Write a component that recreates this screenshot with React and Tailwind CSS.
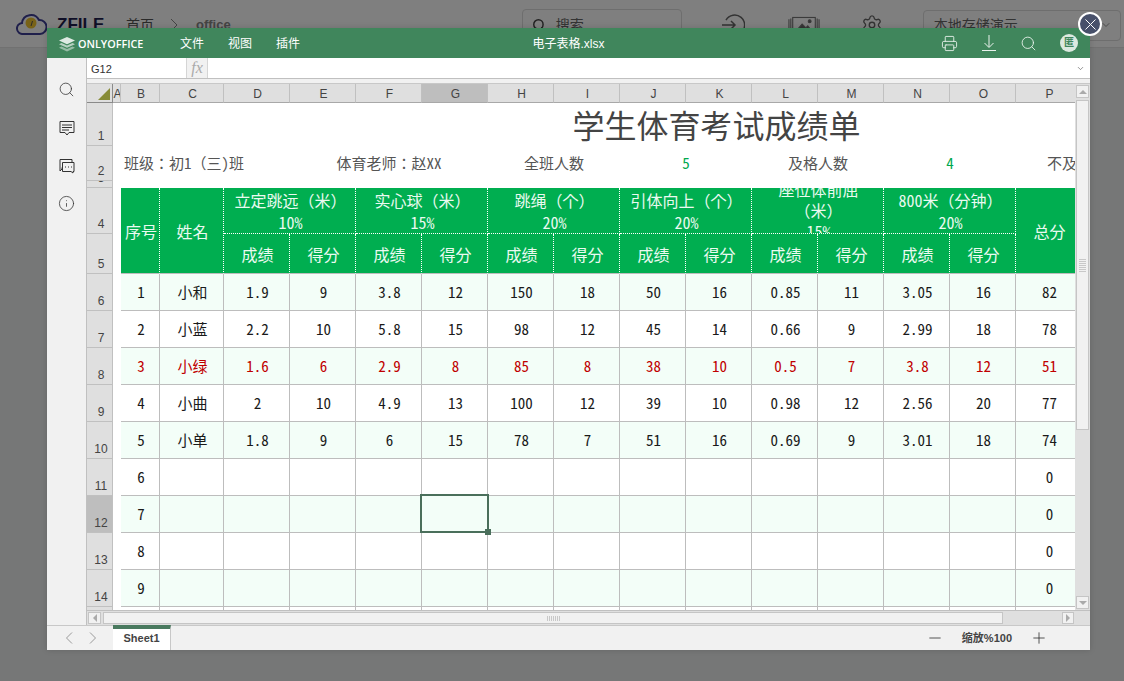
import React from 'react';
import { Printer, Search, Info, Settings, ChevronDown, Plus, Minus, X } from 'lucide-react';

const columns = ['A', 'B', 'C', 'D', 'E', 'F', 'G', 'H', 'I', 'J', 'K', 'L', 'M', 'N', 'O', 'P'];

const students = [
  ['1', '小和', '1.9', '9', '3.8', '12', '150', '18', '50', '16', '0.85', '11', '3.05', '16', '82'],
  ['2', '小蓝', '2.2', '10', '5.8', '15', '98', '12', '45', '14', '0.66', '9', '2.99', '18', '78'],
  ['3', '小绿', '1.6', '6', '2.9', '8', '85', '8', '38', '10', '0.5', '7', '3.8', '12', '51'],
  ['4', '小曲', '2', '10', '4.9', '13', '100', '12', '39', '10', '0.98', '12', '2.56', '20', '77'],
  ['5', '小单', '1.8', '9', '6', '15', '78', '7', '51', '16', '0.69', '9', '3.01', '18', '74'],
  ['6', '', '', '', '', '', '', '', '', '', '', '', '', '', '0'],
  ['7', '', '', '', '', '', '', '', '', '', '', '', '', '', '0'],
  ['8', '', '', '', '', '', '', '', '', '', '', '', '', '', '0'],
  ['9', '', '', '', '', '', '', '', '', '', '', '', '', '', '0'],
  ['', '', '', '', '', '', '', '', '', '', '', '', '', '', ''],
];

const groups = [
  { title: '立定跳远（米）', weight: '10%' },
  { title: '实心球（米）', weight: '15%' },
  { title: '跳绳（个）', weight: '20%' },
  { title: '引体向上（个）', weight: '20%' },
  { title: '座位体前屈（米）', weight: '15%', narrow: true },
  { title: '800米（分钟）', weight: '20%' },
];

const sheetFont = "font-['Noto_Sans_Mono_CJK_JP','Noto_Sans_CJK_JP',monospace]";
const uiFont = "font-['Liberation_Sans','Noto_Sans_CJK_SC',sans-serif]";

const RowLabel = ({ n, active }) => (
  <div className={`flex items-end justify-center overflow-hidden border-r border-b border-[#c0c0c0] pl-[3px] text-xs leading-[18px] text-[#444] ${uiFont} ${active ? 'bg-[#bebebe]' : 'bg-[#dfdfdf]'}`}>
    {n}
  </div>
);

const HeadCell = ({ className = '', children }) => (
  <div className={`flex items-center justify-center overflow-hidden border-r border-b border-dotted border-white bg-[#00ae50] pl-[2px] text-center text-base text-[#eafaf0] ${className}`}>
    {children}
  </div>
);

// bottom edge of the green head sits on a solid grey line
const headBottom = '[border-bottom-style:solid] border-b-[#bdbdbd]';

const Sheet = () => (
  <div className={`grid h-[526px] w-[988px] flex-none grid-cols-[26px_8px_39px_64px_repeat(12,66px)_66px] grid-rows-[19px_43px_35px_7px_46px_40px_repeat(10,37px)] overflow-hidden bg-white ${sheetFont}`}>
    {/* column headers */}
    <div className="relative border-r border-b border-[#8a8a8a] bg-[#dfdfdf]">
      <svg className="absolute left-[11px] top-[4px]" width="12" height="12" viewBox="0 0 12 12">
        <polygon points="12,0 12,12 0,12" fill="#878c38" />
      </svg>
    </div>
    {columns.map((c) => (
      <div
        key={c}
        className={`flex items-center justify-center overflow-hidden border-r border-b border-r-[#c0c0c0] border-b-[#a8a8a8] pl-[2px] pt-[2px] text-xs text-[#444] ${uiFont} ${c === 'G' ? 'bg-[#bebebe]' : 'bg-[#dfdfdf]'}`}
      >
        {c}
      </div>
    ))}

    {/* title */}
    <RowLabel n="1" />
    <div className="col-span-5" />
    <div className="col-span-11 flex items-center justify-center overflow-hidden whitespace-nowrap pr-[5px] pb-px text-[32px] text-[#444]">学生体育考试成绩单</div>

    {/* summary */}
    <RowLabel n="2" />
    <div />
    <div className="col-span-3 flex items-center pl-[3px] text-[15px] whitespace-nowrap text-[#555]">班级：初1（三)班</div>
    <div className="col-span-3 flex items-center justify-center text-[15px] whitespace-nowrap text-[#555]">体育老师：赵XX</div>
    <div className="col-span-2 flex items-center justify-center text-[15px] text-[#555]">全班人数</div>
    <div className="col-span-2 flex items-center justify-center text-[15px] text-[#00a84e]">5</div>
    <div className="col-span-2 flex items-center justify-center text-[15px] text-[#555]">及格人数</div>
    <div className="col-span-2 flex items-center justify-center text-[15px] text-[#00a84e]">4</div>
    <div className="flex items-center overflow-hidden whitespace-nowrap pl-[31px] text-[15px] text-[#555]">不及格人数</div>

    <RowLabel n="3" />
    <div className="col-span-16" />

    {/* table head */}
    <RowLabel n="4" />
    <div />
    <HeadCell className={`row-span-2 ${headBottom}`}>序号</HeadCell>
    <HeadCell className={`row-span-2 ${headBottom}`}>姓名</HeadCell>
    {groups.map((g) => (
      <HeadCell key={g.title} className={`col-span-2 ${g.narrow ? 'leading-[21px]' : 'leading-[22px]'}`}>
        <div className={g.narrow ? 'w-[100px]' : 'whitespace-nowrap'}>
          {g.title}
          <br />
          {g.weight}
        </div>
      </HeadCell>
    ))}
    <HeadCell className={`row-span-2 ${headBottom}`}>总分</HeadCell>
    <RowLabel n="5" />
    <div />
    {groups.flatMap((g) => [
      <HeadCell key={g.title + '成绩'} className={headBottom}>成绩</HeadCell>,
      <HeadCell key={g.title + '得分'} className={headBottom}>得分</HeadCell>,
    ])}

    {/* data */}
    {students.map((row, r) => (
      <React.Fragment key={r}>
        <RowLabel n={r < 9 ? r + 6 : ''} active={r === 6} />
        <div />
        {row.map((v, c) => (
          <div
            key={c}
            className={`relative flex items-center justify-center border-r border-b border-[#bdbdbd] pl-[2px] text-[15px] ${r % 2 === 0 ? 'bg-[#f3fef8]' : 'bg-white'} ${r === 2 ? 'text-[#c00000]' : 'text-[#1a1a1a]'}`}
          >
            {v}
            {r === 6 && c === 5 && (
              <div className="absolute -left-[2px] -top-[2px] z-10 h-[39px] w-[69px] border-2 border-[#4a6f5b]">
                <div className="absolute -bottom-[4px] -right-[4px] size-[6px] bg-[#4a6f5b]" />
              </div>
            )}
          </div>
        ))}
      </React.Fragment>
    ))}
  </div>
);

const VScroll = () => (
  <div className="flex h-[526px] w-[15px] flex-col items-center gap-[2px] bg-[#dfdfdf] pt-px">
    <div className="flex h-[13px] w-[13px] items-center justify-center border border-[#c5c5c5] bg-[#f1f1f1]">
      <div className="border-x-[4px] border-b-[4px] border-x-transparent border-b-[#aaa]" />
    </div>
    <div className="flex h-[330px] w-[13px] flex-col items-center justify-end gap-px border border-[#c5c5c5] bg-[#f1f1f1] pb-[157px]">
      {[0, 1, 2, 3, 4, 5, 6].map((i) => (
        <div key={i} className="h-px w-[7px] bg-[#c8c8c8]" />
      ))}
    </div>
    <div className="mt-auto mb-px flex h-[13px] w-[13px] items-center justify-center border border-[#c5c5c5] bg-[#f1f1f1]">
      <div className="border-x-[4px] border-t-[4px] border-x-transparent border-t-[#aaa]" />
    </div>
  </div>
);

const HScroll = () => (
  <div className="flex h-[15px] items-center gap-[2px] border-t border-[#c0c0c0] bg-[#dfdfdf] pl-px">
    <div className="flex h-[12px] w-[13px] items-center justify-center border border-[#c5c5c5] bg-[#f1f1f1]">
      <div className="border-y-[4px] border-r-[4px] border-y-transparent border-r-[#aaa]" />
    </div>
    <div className="flex h-[12px] w-[900px] items-center justify-center gap-px border border-[#c5c5c5] bg-[#f1f1f1]">
      {[0, 1, 2, 3, 4, 5, 6].map((i) => (
        <div key={i} className="h-[5px] w-px bg-[#c8c8c8]" />
      ))}
    </div>
    <div className="ml-[57px] flex h-[12px] w-[12px] items-center justify-center border border-[#c5c5c5] bg-[#f1f1f1]">
      <div className="border-y-[4px] border-l-[4px] border-y-transparent border-l-[#aaa]" />
    </div>
  </div>
);

const Rail = () => (
  <div className="flex w-[40px] flex-col items-center gap-[22px] border-r border-[#c0c0c0] bg-[#f1f1f1] pt-[23px] text-[#333]">
    <Search size={17} strokeWidth={1.1} />
    <svg width="16" height="16" viewBox="0 0 16 16" fill="none" stroke="currentColor">
      <path d="M1 1.5h14v11h-5L8 15l-2-2.500H1z" />
      <path d="M3 5h10M3 7.500h10M3 10h7" />
    </svg>
    <svg width="16" height="16" viewBox="0 0 16 16" fill="none" stroke="currentColor">
      <path d="M3 9.500V11L1 13V1.500h12V4" />
      <path d="M3.500 4.500h11.500v9h-1v1.500l-2-1.500h-8.500z" />
      <path d="M6 9h1M9 9h1M12 9h1" />
    </svg>
    <Info size={17} strokeWidth={1.1} className="-mt-px" />
  </div>
);

const Editor = () => (
  <div className={`absolute left-[47px] top-[28px] flex h-[622px] w-[1043px] flex-col bg-[#f1f1f1] shadow-[0_0_6px_rgba(0,0,0,0.15)] ${uiFont}`}>
    {/* top bar */}
    <div className="grid h-[31px] grid-cols-[1fr_auto_1fr] items-center bg-[#40865c] pl-3 pr-[12px] text-xs text-white">
      <div className="flex items-center pt-[2px]">
        <svg width="16" height="15" viewBox="0 0 16 15" fill="#dfeae3">
          <path d="M8 0l8 3.600-8 3.600-8-3.600z" />
          <path opacity=".75" d="M2.500 6L8 8.500 13.500 6 16 7.200 8 10.800 0 7.200z" />
          <path opacity=".55" d="M2.500 9.600L8 12.100l5.500-2.500L16 10.800 8 14.400 0 10.800z" />
        </svg>
        <span className="ml-[3px] w-[66px] font-['Open_Sans'] text-[10.800px] font-semibold">ONLYOFFICE</span>
        <div className="ml-9 flex gap-6">
          <span>文件</span>
          <span>视图</span>
          <span>插件</span>
        </div>
      </div>
      <div className="pt-[2px]">电子表格.xlsx</div>
      <div className="flex items-center justify-end gap-[23px] text-[#eaf2ed]">
        <Printer size={17} strokeWidth={1.25} />
        <svg width="16" height="16" viewBox="0 0 16 16" fill="none" stroke="currentColor">
          <path d="M8 0v12M3.500 8L8 12.500 12.500 8M1 15.500h14" />
        </svg>
        <Search size={17} strokeWidth={1.25} />
        <div className="flex size-[18px] items-center justify-center rounded-full bg-[#dce9e0] text-[10px] font-bold text-[#40865c]">匿</div>
      </div>
    </div>

    <div className="flex flex-1">
      <Rail />
      <div className="flex w-[1003px] flex-col">
        {/* formula bar */}
        <div className="flex h-[21px] border-b border-[#c0c0c0] bg-white">
          <div className="w-[99px] pl-1 text-[11px] leading-[22px] text-[#333]">G12</div>
          <div className="flex w-[22px] items-center justify-center border-x border-[#d5d5d5] bg-[#f1f1f1] font-['Liberation_Serif'] text-base italic text-[#aaa]">fx</div>
          <div className="flex flex-1 items-center justify-end pr-[5px]">
            <ChevronDown size={9} strokeWidth={1.500} className="text-[#444]" />
          </div>
        </div>
        <div className="h-[5px] border-b border-[#c8c8c8]" />
        <div className="flex">
          <Sheet />
          <VScroll />
        </div>
        <HScroll />
      </div>
    </div>

    {/* sheet tabs */}
    <div className="flex h-[25px] items-center border-t border-[#c8c8c8] bg-[#f1f1f1]">
      <div className="flex w-[66px] items-center gap-[16px] pl-[18px] text-[#999]">
        <svg width="8" height="12" viewBox="0 0 8 12" fill="none" stroke="currentColor">
          <path d="M7 .5L1.500 6 7 11.500" />
        </svg>
        <svg width="8" height="12" viewBox="0 0 8 12" fill="none" stroke="currentColor">
          <path d="M1 .5L6.500 6 1 11.500" />
        </svg>
      </div>
      <div className="-mt-px h-[25px] w-[58px] self-start border-t-4 border-r border-t-[#4a7a5f] border-r-[#c8c8c8] bg-white text-center text-[11px] font-bold leading-[18px] text-[#444]">Sheet1</div>
      <div className="ml-auto flex items-center text-[#222]">
        <Minus size={18} strokeWidth={1} />
        <span className="ml-[18px] text-[11px] font-bold text-[#444]">缩放%100</span>
        <Plus size={18} strokeWidth={1} className="ml-[18px] mr-[42px]" />
      </div>
    </div>
  </div>
);

const PageHeader = () => (
  <div className={`flex h-[48px] items-center border-b border-[#e2e2e2] bg-white pt-[2px] ${uiFont}`}>
    <svg className="-mt-[2px] ml-[16px]" width="31" height="22" viewBox="0 0 31 22" fill="none">
      <path d="M7 21a5.500 5.500 0 0 1-1-11 9 9 0 0 1 17-3 7 7 0 0 1 1 14z" stroke="#3f3f97" strokeWidth="2" />
      <circle cx="15" cy="10" r="5.500" fill="#f0c52f" />
      <path d="M15 13l1.500-5" stroke="#555" />
    </svg>
    <span className="ml-[10px] w-[59px] text-[17px] font-bold text-[#1f1f4f]">ZFILE</span>
    <span className="ml-[10px] text-sm text-[#555]">首页</span>
    <svg className="ml-[8px]" width="24" height="24" viewBox="0 0 24 24" fill="none" stroke="#888">
      <path d="M9 6l6 6-6 6" />
    </svg>
    <span className="ml-[10px] text-[13px] font-bold text-[#888]">office</span>
    <div className="ml-[291px] flex h-[31px] w-[160px] items-center rounded border border-[#dcdcdc] pl-[9px] text-[#444]">
      <Search size={14} strokeWidth={2.500} />
      <span className="ml-[10px] text-sm text-[#666]">搜索</span>
    </div>
    <svg className="ml-[39px]" width="24" height="24" viewBox="0 0 24 24" fill="none" stroke="#666" strokeWidth="1.500">
      <path d="M5 7a10 10 0 1 1 0 10M1 12h13M10 8l4 4-4 4" />
    </svg>
    <svg className="ml-[43px]" width="32" height="24" viewBox="0 0 34 24" fill="none" stroke="#777" strokeWidth="1.200">
      <rect x="5" y="4" width="24" height="17" />
      <path d="M1 6v13M3 5v15M31 5v15M33 6v13" />
      <path d="M9 18l6-7 4 4 2-2 4 5z" fill="#666" />
      <circle cx="23" cy="8" r="1.500" fill="#666" />
    </svg>
    <Settings className="ml-[41px] text-[#666]" size={22} strokeWidth={1.500} />
    <div className="ml-[40px] mt-px flex h-[31px] w-[198px] items-center rounded border border-[#dcdcdc] pl-[10px] pr-2 text-sm text-[#666]">
      本地存储演示
      <ChevronDown size={12} className="ml-auto text-[#999]" />
    </div>
  </div>
);

export default function App() {
  return (
    <div className="relative h-[681px] w-[1124px] overflow-hidden bg-[#edeeef]">
      <PageHeader />
      <div className="absolute inset-0 bg-black/50" />
      <Editor />
      <button className="absolute left-[1078px] top-[12px] flex size-[24px] items-center justify-center rounded-full border-2 border-white bg-[#47506a] text-white">
        <X size={19} strokeWidth={1.250} />
      </button>
    </div>
  );
}
